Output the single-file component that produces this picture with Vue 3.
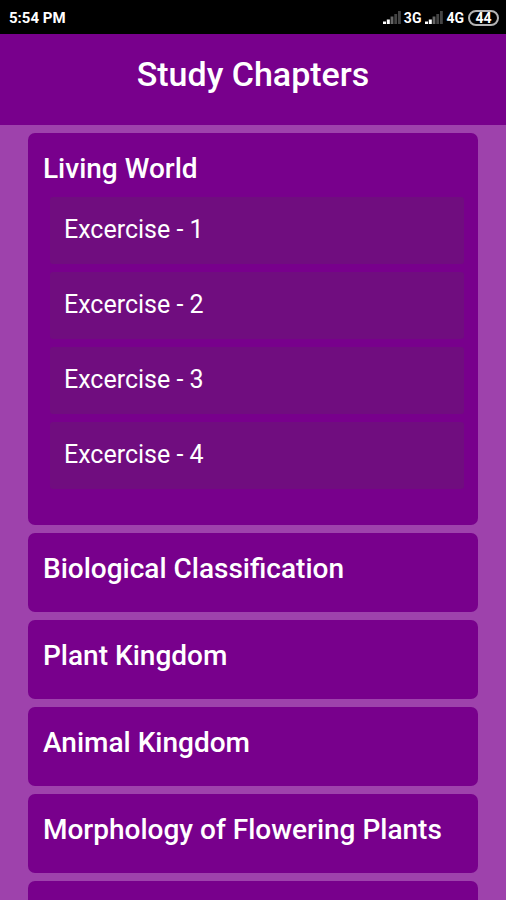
<script setup>
import { ref } from 'vue';

const chapters = [
  { id: 1, name: 'Living World', exercises: [1, 2, 3, 4] },
  { id: 2, name: 'Biological Classification', exercises: [] },
  { id: 3, name: 'Plant Kingdom', exercises: [] },
  { id: 4, name: 'Animal Kingdom', exercises: [] },
  { id: 5, name: 'Morphology of Flowering Plants', exercises: [] },
  { id: 6, name: '', exercises: [] }
];

const networks = ['3G', '4G'];
const openId = ref(1);

function toggle(id) {
  openId.value = openId.value === id ? null : id;
}
</script>

<template>
  <div class="screen">
    <div class="status-bar">
      <span>5:54 PM</span>
      <div class="status-right">
        <div v-for="net in networks" :key="net" class="network">
          <svg width="18" height="13" viewBox="0 0 18 13">
            <g fill="#fff">
              <rect x="0" y="10.5" width="3" height="2.5" />
              <rect x="3.8" y="8.5" width="3" height="4.5" />
            </g>
            <rect x="7.6" y="5.5" width="2.8" height="7.5" fill="#666" />
            <g fill="#444">
              <rect x="11.3" y="3" width="2.8" height="10" />
              <rect x="15" y="0" width="2.8" height="13" />
            </g>
          </svg>
          <span>{{ net }}</span>
        </div>
        <span class="battery">44</span>
      </div>
    </div>

    <header class="header">
      <h1>Study Chapters</h1>
    </header>

    <main class="chapters">
      <section v-for="chapter in chapters" :key="chapter.id" class="chapter">
        <button
          type="button"
          class="chapter-title"
          :aria-expanded="openId === chapter.id"
          @click="toggle(chapter.id)"
        >
          {{ chapter.name }}
        </button>
        <div v-if="openId === chapter.id && chapter.exercises.length" class="exercises">
          <button v-for="n in chapter.exercises" :key="n" type="button" class="exercise">
            Excercise - {{ n }}
          </button>
        </div>
      </section>
    </main>
  </div>
</template>

<style>
body {
  background: #9e42ac;
}
</style>

<style scoped>
.screen {
  display: flex;
  flex-direction: column;
  height: 100vh;
  overflow: hidden;
  background: #9e42ac;
  color: #fff;
  font-family: Roboto, 'Liberation Sans', sans-serif;
}

.status-bar {
  display: flex;
  flex: none;
  align-items: center;
  justify-content: space-between;
  height: 34px;
  padding: 1px 7px 0 9px;
  box-sizing: border-box;
  background: #000;
  font-size: 15px;
  font-weight: 700;
}

.status-right {
  display: flex;
  align-items: center;
  gap: 4px;
}

.network {
  display: flex;
  align-items: center;
  gap: 3px;
  font-size: 14px;
}

.battery {
  width: 31px;
  border: 2px solid #b4b4b4;
  border-radius: 8px;
  box-sizing: border-box;
  font-size: 14px;
  line-height: 12px;
  text-align: center;
}

.header {
  flex: none;
  padding: 20px 16px 31px;
  background: #78008c;
  text-align: center;
}

.header h1 {
  margin: 0;
  font-size: 34px;
  font-weight: 500;
  line-height: 40px;
}

.chapters {
  display: flex;
  flex: 1;
  flex-direction: column;
  gap: 8px;
  min-height: 0;
  padding: 8px 28px;
  overflow-y: auto;
  scrollbar-width: none;
}

.chapter {
  flex: none;
  border-radius: 7px;
  background: #78008c;
}

button {
  display: block;
  width: 100%;
  border: 0;
  background: none;
  color: inherit;
  font-family: inherit;
  text-align: left;
  cursor: pointer;
}

.chapter-title {
  min-height: 79px;
  padding: 16px 15px 23px;
  font-size: 28px;
  font-weight: 500;
  line-height: 40px;
}

/* the list tucks in closer under an open title */
.chapter-title[aria-expanded='true'] {
  min-height: 0;
  padding-bottom: 8px;
}

.exercises {
  display: flex;
  flex-direction: column;
  gap: 8px;
  padding: 0 14px 36px 22px;
}

.exercise {
  padding: 17px 14px 18px;
  border-radius: 3px;
  background: #700d7f;
  font-size: 25px;
  font-weight: 400;
  line-height: 32px;
}
</style>
